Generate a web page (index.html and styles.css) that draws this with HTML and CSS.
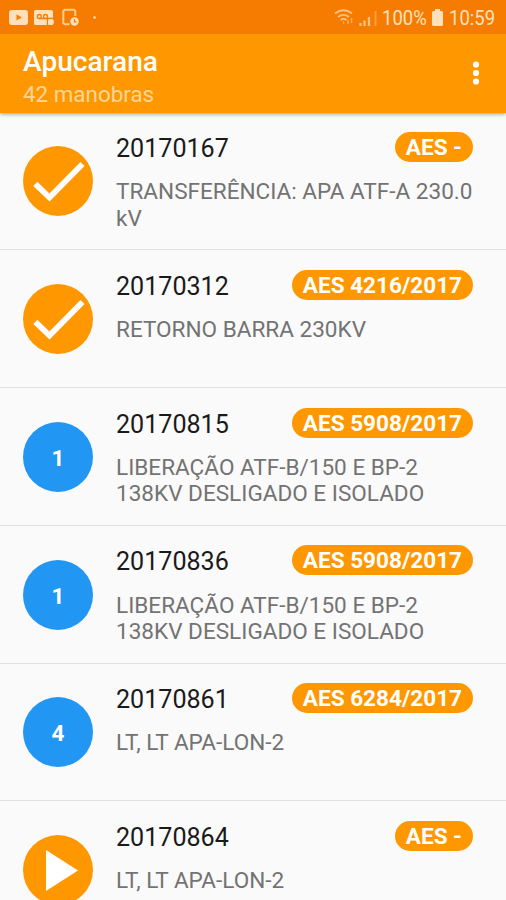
FILE: index.html
```html
<!DOCTYPE html>
<html lang="pt-BR">
<head>
<meta charset="utf-8">
<title>Apucarana</title>
<link rel="stylesheet" href="styles.css">
</head>
<body>
<div class="screen">
  <header class="top">
    <div class="status">
      <svg class="notices" viewBox="0 0 100 34" fill="#ffe0bc">
        <path fill-rule="evenodd" d="M12 10h13q3 0 3 3v9q0 3-3 3H12q-3 0-3-3v-9q0-3 3-3zm4.500 4.200v6.400l5.300-3.200z"/>
        <path fill-rule="evenodd" d="M35.500 10H51q2 0 2 2v13H35.500q-1.500 0-1.500-1.500v-12q0-1.500 1.500-1.500z"/>
        <g fill="none" stroke="#f57c00" stroke-width="1.300"><circle cx="39.300" cy="16.500" r="2"/><circle cx="45.500" cy="16.500" r="2"/><path d="M39 18.700h7M47.500 25v-6.500h6"/></g>
        <circle cx="51" cy="22" r="2.200" fill="none" stroke="#ffe0bc" stroke-width="1.500"/>
        <path d="M69.500 24.300H65l-1.700-1V11l1.500-1.200h9l1.500 1.200v5" fill="none" stroke="#ffd08d" stroke-width="2"/>
        <circle cx="74.500" cy="21.500" r="4.200"/><path d="M74.500 19v2.800h2" fill="none" stroke="#f57c00" stroke-width="1.200"/>
        <circle cx="94.500" cy="17.500" r="1.300"/>
      </svg>
      <svg class="signals" viewBox="0 0 50 34" fill="none" stroke="#ffc182" stroke-width="1.800">
        <path d="M2 13.500q8.500-6.500 17 0M5 17q5.500-4.200 11 0M7.500 20q3-2.300 6 0"/>
        <path d="M10.500 21v3M15 20v4M18.500 18v5" stroke-width="1.500" opacity=".7"/>
        <path d="M27.500 23v3M31.500 20.500V26M36 17v9" stroke-width="2.300"/>
        <path d="M42.500 11v15" opacity=".5" stroke-width="2"/>
      </svg>
      <span class="percent">100%</span>
      <svg class="battery" viewBox="0 0 13 34"><path d="M4 9h5v2h1.500q1.500 0 1.500 1.500v12q0 1.500-1.500 1.500h-8q-1.500 0-1.500-1.500v-12Q1 11 2.500 11H4z" fill="#ffe0bc"/></svg>
      <span class="clock">10:59</span>
    </div>
    <div class="appbar">
      <div class="heading">
        <h1 class="title">Apucarana</h1>
        <p class="subtitle">42 manobras</p>
      </div>
      <svg class="more" viewBox="0 0 8 24" fill="#fff"><circle cx="4" cy="3.500" r="3.100"/><circle cx="4" cy="12" r="3.100"/><circle cx="4" cy="20.500" r="3.100"/></svg>
    </div>
  </header>
  <main class="list">
    <article class="row">
      <div class="avatar"><svg class="icon" viewBox="0 0 70 70"><path d="M12.300 37.800 26.500 51.500 59.500 18" fill="none" stroke="#fff" stroke-width="5.800"/></svg></div>
      <div class="body"><div class="head"><h2 class="code">20170167</h2><span class="badge">AES -</span></div><p class="desc">TRANSFERÊNCIA: APA ATF-A 230.0<br>kV</p></div>
    </article>
    <article class="row">
      <div class="avatar"><svg class="icon" viewBox="0 0 70 70"><path d="M12.300 37.800 26.500 51.500 59.500 18" fill="none" stroke="#fff" stroke-width="5.800"/></svg></div>
      <div class="body"><div class="head"><h2 class="code">20170312</h2><span class="badge">AES 4216/2017</span></div><p class="desc">RETORNO BARRA 230KV</p></div>
    </article>
    <article class="row">
      <div class="avatar count">1</div>
      <div class="body"><div class="head"><h2 class="code">20170815</h2><span class="badge">AES 5908/2017</span></div><p class="desc">LIBERAÇÃO ATF-B/150 E BP-2<br>138KV DESLIGADO E ISOLADO</p></div>
    </article>
    <article class="row">
      <div class="avatar count">1</div>
      <div class="body"><div class="head"><h2 class="code">20170836</h2><span class="badge">AES 5908/2017</span></div><p class="desc">LIBERAÇÃO ATF-B/150 E BP-2<br>138KV DESLIGADO E ISOLADO</p></div>
    </article>
    <article class="row">
      <div class="avatar count">4</div>
      <div class="body"><div class="head"><h2 class="code">20170861</h2><span class="badge">AES 6284/2017</span></div><p class="desc">LT, LT APA-LON-2</p></div>
    </article>
    <article class="row">
      <div class="avatar"><svg class="icon" viewBox="0 0 70 70"><path d="M23 15v41l32-20.500z" fill="#fff"/></svg></div>
      <div class="body"><div class="head"><h2 class="code">20170864</h2><span class="badge">AES -</span></div><p class="desc">LT, LT APA-LON-2</p></div>
    </article>
  </main>
</div>
</body>
</html>
```
FILE: styles.css
```css
* { box-sizing: border-box; margin: 0; padding: 0; }
body { font-family: Roboto, "Liberation Sans", sans-serif; background: #fafafa; }
.screen { width: 506px; height: 900px; overflow: hidden; display: flex; flex-direction: column; }
.top { flex: none; height: 112.500px; background: #ff9800; box-shadow: 0 1px 4px rgba(0, 0, 0, .4); z-index: 1; }
.status { height: 34px; background: #f57c00; display: flex; align-items: center; padding-right: 11px; color: #ffe0bc; font-size: 21px; line-height: 34px; }
.notices { width: 100px; height: 34px; }
.signals { width: 50px; height: 34px; margin-left: auto; }
.percent, .clock { display: block; height: 34px; transform: scaleX(.88); transform-origin: left; white-space: nowrap; padding-top: 1px; }
.percent { width: 45px; margin-left: -1px; }
.battery { width: 13px; height: 34px; margin: 0 5px 0 4px; }
.clock { width: 46px; }
.appbar { height: 78.500px; display: flex; align-items: center; justify-content: space-between; padding: 0 26px 0 23px; }
.title { font-size: 28.100px; line-height: 30px; font-weight: 500; color: #fff; margin-top: 8px; }
.subtitle { font-size: 22.400px; line-height: 27px; color: #ffd698; margin-top: 4px; }
.more { width: 8px; height: 24px; }
.list { flex: none; }
.row { height: 137.800px; display: flex; border-bottom: 1.400px solid #e0e0e0; padding: 19px 33px 0 23px; }
.avatar { flex: none; width: 70px; height: 70px; margin-top: 14.700px; margin-right: 23px; border-radius: 50%; background: #ff9800; }
.count { background: #2196f3; color: #fff; display: flex; align-items: center; justify-content: center; font-size: 22.500px; font-weight: 700; padding-top: 2px; }
.icon { display: block; width: 70px; height: 70px; }
.body { flex: 1; min-width: 0; }
.head { display: flex; justify-content: space-between; align-items: center; height: 31px; }
.code { font-size: 25.100px; line-height: 30px; font-weight: 400; color: #1a1a1a; margin-top: 4px; }
.badge { height: 30px; border-radius: 15px; background: #ff9800; color: #fff; font-size: 22.550px; line-height: 31px; font-weight: 700; padding: 0 11px; }
.desc { font-size: 22.560px; line-height: 26.700px; color: #737373; margin-top: 16.700px; white-space: nowrap; }
```
